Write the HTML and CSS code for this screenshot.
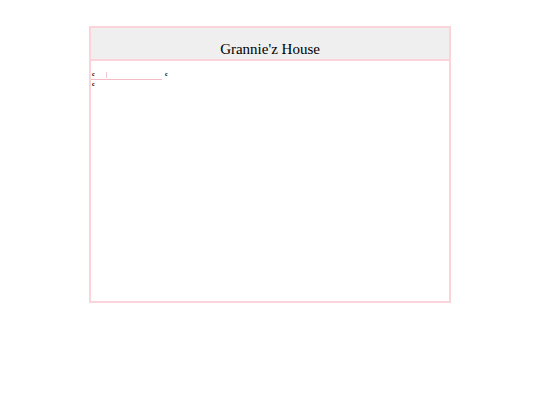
FILE: index.html
```html
<!DOCTYPE html>
<html>
<head>
<meta charset="utf-8">
<link rel="stylesheet" href="styles.css">
</head>
<body>
<div class="frame">
  <div class="header">Grannie'z House</div>
  <div class="content">
    <div class="row">
      <span class="field"><span class="tiny">c</span><span class="caret"></span></span>
      <span class="tiny after">c</span>
    </div>
    <div class="tiny line2">c</div>
  </div>
</div>
</body>
</html>
```
FILE: styles.css
```css
html, body {
  margin: 0;
  padding: 0;
  background: #ffffff;
}
body {
  font-family: "Liberation Serif", "Times New Roman", serif;
}
.frame {
  box-sizing: border-box;
  width: 362px;
  height: 277px;
  margin: 26px auto 0;
  border: 2px solid #fbd3db;
  display: flex;
  flex-direction: column;
}
.header {
  background: #efefef;
  border-bottom: 2px solid #fbd3db;
  text-align: center;
  font-size: 15px;
  line-height: 17px;
  color: #000;
  padding-top: 13px;
  box-sizing: border-box;
  flex: 0 0 33px;
}
.content {
  flex: 1;
  padding-top: 9px;
}
.row {
  display: flex;
  align-items: flex-end;
  height: 10px;
}
.tiny {
  font-size: 6px;
  line-height: 8px;
  color: #000;
  font-weight: bold;
}
.field {
  width: 71px;
  height: 10px;
  border-bottom: 1px solid #f5bcc8;
  position: relative;
  display: flex;
  align-items: flex-end;
  padding-left: 1px;
  padding-bottom: 1px;
  box-sizing: border-box;
}
.caret {
  position: absolute;
  left: 15px;
  top: 2px;
  width: 1px;
  height: 6px;
  background: #f4c9d1;
}
.after {
  margin-left: 3px;
  margin-bottom: 2px;
}
.line2 {
  padding-left: 1px;
}
```
